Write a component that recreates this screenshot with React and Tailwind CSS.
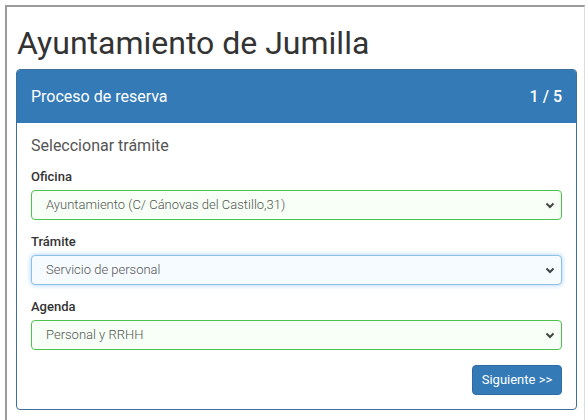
const font = { fontFamily: 'Roboto, "Liberation Sans", sans-serif' }

function Chevron() {
  return (
    <svg width="10" height="7" viewBox="0 0 10 7" className="shrink-0">
      <polyline points="1.5,1.5 5,5 8.5,1.5" fill="none" stroke="#444" strokeWidth="2" />
    </svg>
  )
}

function Field({ label, value, focus, last }) {
  return (
    <div className={last ? '' : 'mb-[13px]'}>
      <div className="text-[13px] leading-[18px] font-medium text-[#333] mb-[4px]">{label}</div>
      <div
        className={
          'h-[30px] rounded-[4px] border flex items-center justify-between pl-[14px] pr-[6px] text-[13px] font-light text-[#555] ' +
          (focus
            ? 'border-[#8ec0ea] bg-[#f5fbff] shadow-[0_0_5px_rgba(102,175,233,0.6)]'
            : 'border-[#4cc24c] bg-[#f7fff7]')
        }
      >
        <span>{value}</span>
        <Chevron />
      </div>
    </div>
  )
}

export default function App() {
  return (
    <div className="bg-white h-[420px] overflow-hidden pt-[5px] pl-[5px]" style={font}>
      <div className="w-[580px] h-[500px] border-t-2 border-l-2 border-[#9a9a9a] border-r border-r-[#dcdcdc] pl-[9px]">
        <h1 className="mt-[18px] mb-[8px] pl-px text-[32px] leading-[36px] text-[#333]">Ayuntamiento de Jumilla</h1>

        <div className="w-[561px] rounded-[4px] border border-[#3f6f9c] overflow-hidden">
          <div className="h-[53px] bg-[#337ab7] flex items-center justify-between px-[14px] text-white text-[16px]">
            <span>Proceso de reserva</span>
            <span className="font-medium">1 / 5</span>
          </div>

          <div className="px-[14px] pt-[12px] pb-[14px]">
            <h3 className="text-[16px] leading-[22px] text-[#555] mb-[11px]">Seleccionar trámite</h3>
            <Field label="Oficina" value="Ayuntamiento (C/ Cánovas del Castillo,31)" />
            <Field label="Trámite" value="Servicio de personal" focus />
            <Field label="Agenda" value="Personal y RRHH" last />
            <div className="flex justify-end mt-[15px]">
              <button className="w-[90px] h-[30px] rounded-[4px] bg-[#337ab7] border border-[#2e6da4] text-white text-[13px]">
                Siguiente &gt;&gt;
              </button>
            </div>
          </div>
        </div>
      </div>
    </div>
  )
}
